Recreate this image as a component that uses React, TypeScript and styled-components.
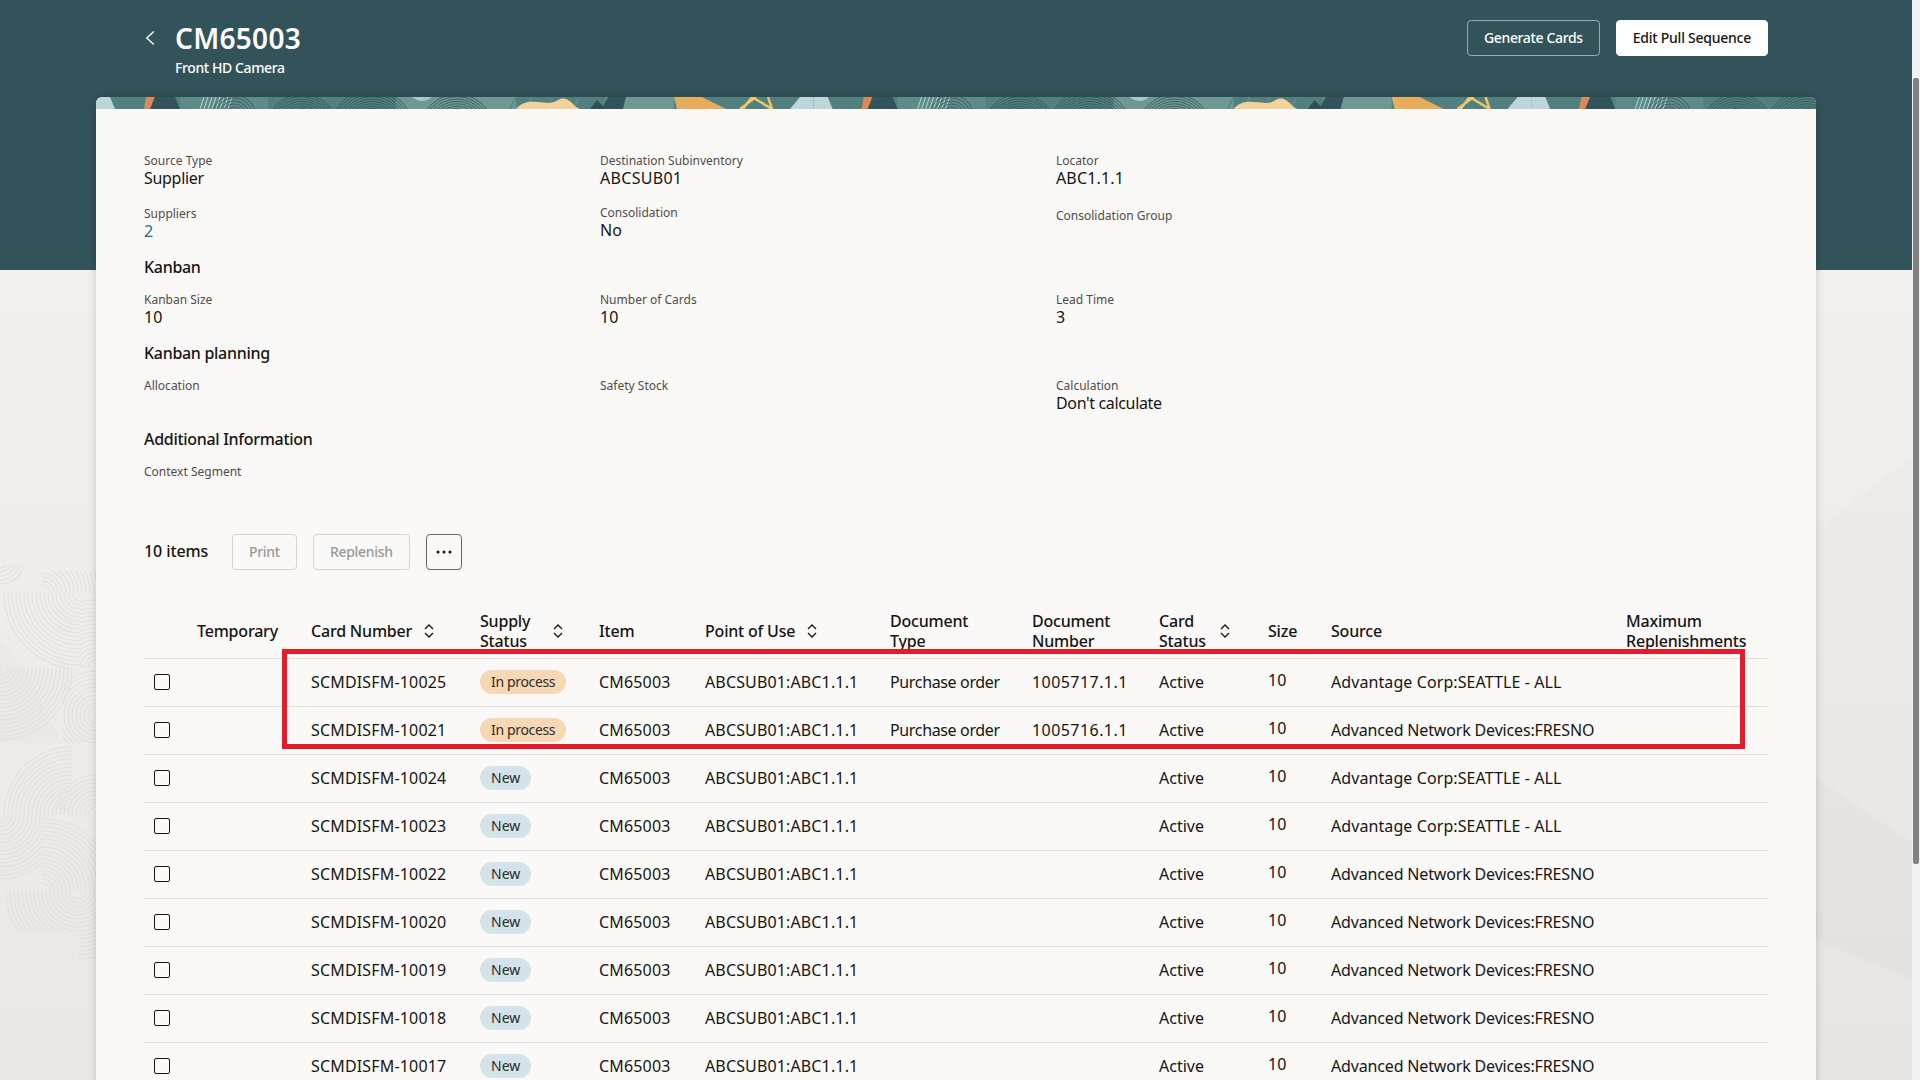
import React from 'react';
import styled, { createGlobalStyle } from 'styled-components';

const GlobalStyle = createGlobalStyle`
  html, body {
    margin: 0;
    height: 100%;
    overflow: hidden;
  }
  body {
    font-family: 'Noto Sans', 'Liberation Sans', sans-serif;
    color: #161513;
  }
  * {
    box-sizing: border-box;
  }
`;

const Page = styled.div`
  position: relative;
  height: 100vh;
  overflow: hidden;
  background: linear-gradient(#33535a 0 270px, #f1f0ee 270px, #e9e8e6 100%);
`;

const Backdrop = styled.svg`
  position: absolute;
  left: 0;
  top: 0;
  width: 1920px;
  height: 1080px;
`;

const Content = styled.div`
  position: relative;
  width: 1912px;
`;

const Header = styled.header`
  display: flex;
  justify-content: space-between;
  height: 97px;
  padding: 20px 144px 0 144px;
`;

const TitleArea = styled.div`
  display: flex;
`;

const BackButton = styled.svg`
  width: 10px;
  height: 14px;
  margin: 11px 20px 0 1px;
  fill: none;
  stroke: #fff;
  stroke-width: 1.4;
`;

const Title = styled.h1`
  margin: 0;
  font-size: 28px;
  line-height: 36px;
  font-weight: 600;
  letter-spacing: 0.3px;
  color: #fff;
`;

const Subtitle = styled.div`
  margin-top: 2px;
  font-size: 14px;
  line-height: 20px;
  font-weight: 500;
  letter-spacing: -0.4px;
  color: #fff;
`;

const HeaderActions = styled.div`
  display: flex;
  gap: 16px;
`;

const HeaderButton = styled.button<{ $solid?: boolean }>`
  height: 36px;
  border-radius: 4px;
  border: 1px solid ${(p) => (p.$solid ? '#fff' : 'rgba(255, 255, 255, 0.5)')};
  background: ${(p) => (p.$solid ? '#fff' : 'transparent')};
  color: ${(p) => (p.$solid ? '#161513' : '#fff')};
  font: 500 14px 'Noto Sans', sans-serif;
  letter-spacing: ${(p) => (p.$solid ? '-0.25px' : '-0.35px')};
  padding: 0 16px 2px;
`;

const Card = styled.main`
  margin-left: 96px;
  width: 1720px;
  border-radius: 6px 6px 0 0;
  background: #fbf9f8;
  box-shadow: 0 0 8px rgba(0, 0, 0, 0.18);
  overflow: hidden;
`;

const Band = styled.svg`
  display: block;
  width: 1720px;
  height: 12px;
`;

const CardBody = styled.div`
  padding: 44px 48px 0;
`;

const FieldGrid = styled.div`
  display: grid;
  grid-template-columns: 456px 456px 1fr;
  row-gap: 17px;
`;

const Field = styled.div``;

const LowerField = styled(Field)`
  margin-top: 2px;
`;

const HigherField = styled(Field)`
  margin-top: -1px;
`;

const Label = styled.div`
  font-size: 12px;
  line-height: 16px;
  color: #4f4c49;
`;

const Value = styled.div<{ $link?: boolean; $ls?: number }>`
  min-height: 20px;
  padding-bottom: 2px;
  font-size: 16px;
  line-height: 18px;
  letter-spacing: ${(p) => p.$ls ?? 0}px;
  color: ${(p) => (p.$link ? '#2b6c85' : '#161513')};
`;

const Heading = styled.h2`
  margin: 14px 0 12px;
  padding-bottom: 2px;
  font-size: 16px;
  line-height: 22px;
  font-weight: 500;
  letter-spacing: -0.3px;
`;

const Toolbar = styled.div`
  display: flex;
  align-items: center;
  margin-top: 34px;
  height: 36px;
`;

const ItemCount = styled.div`
  padding-bottom: 2px;
  font-size: 16px;
  font-weight: 500;
  width: 88px;
  letter-spacing: -0.1px;
`;

const ToolButton = styled.button`
  height: 36px;
  padding: 0 16px 2px;
  margin-right: 16px;
  border: 1px solid #d6d4d2;
  border-radius: 4px;
  background: transparent;
  color: #9a9895;
  font: 500 14px 'Noto Sans', sans-serif;
  letter-spacing: -0.3px;
`;

const MoreButton = styled.button`
  display: flex;
  align-items: center;
  justify-content: center;
  width: 36px;
  height: 36px;
  padding: 0;
  border: 1px solid #6b6966;
  border-radius: 4px;
  background: transparent;
`;

const TableWrap = styled.div`
  position: relative;
  margin-top: 41px;
`;

const columns = '53px 114px 169px 119px 106px 185px 142px 127px 109px 63px 295px 142px';

const HeadRow = styled.div`
  display: grid;
  grid-template-columns: ${columns};
  height: 48px;
  padding-bottom: 8px;
  border-bottom: 1px solid #dfdddb;
`;

const HeadCell = styled.div`
  display: flex;
  align-items: center;
  font-size: 16px;
  line-height: 20px;
  font-weight: 500;
  letter-spacing: -0.2px;
`;

const HeadText = styled.span<{ $width?: number }>`
  width: ${(p) => (p.$width ? `${p.$width}px` : 'auto')};
  white-space: pre-line;
`;

const SortIcon = styled.svg`
  flex: none;
  width: 10px;
  height: 14px;
  margin-left: 12px;
  fill: none;
  stroke: #161513;
  stroke-width: 1.3;
`;

const Row = styled.div`
  display: grid;
  grid-template-columns: ${columns};
  align-items: center;
  height: 48px;
  padding-bottom: 2px;
  border-bottom: 1px solid #dfdddb;
  font-size: 16px;
`;

const Cell = styled.div<{ $ls?: number }>`
  white-space: nowrap;
  letter-spacing: ${(p) => p.$ls ?? 0}px;
`;

const SizeCell = styled(Cell)`
  padding-bottom: 3px;
`;

const Checkbox = styled.span`
  display: block;
  width: 16px;
  height: 16px;
  margin-left: 10px;
  border: 1px solid #161513;
  border-radius: 2px;
`;

const Pill = styled.span<{ $tone: 'progress' | 'new' }>`
  display: inline-block;
  height: 24px;
  padding: 0 11px;
  border-radius: 12px;
  font-size: 14px;
  line-height: 24px;
  letter-spacing: ${(p) => (p.$tone === 'progress' ? '-0.35px' : '0')};
  color: #2e2c2a;
  background: ${(p) => (p.$tone === 'progress' ? '#f6d9b4' : '#d4e3e9')};
`;

const Highlight = styled.div`
  position: absolute;
  left: 138px;
  top: 38px;
  width: 1463px;
  height: 100px;
  border: 5px solid #e21c2b;
  pointer-events: none;
`;

const ScrollTrack = styled.div`
  position: absolute;
  top: 0;
  right: 0;
  width: 8px;
  height: 100%;
  background: #f1f1f1;
`;

const ScrollThumb = styled.div`
  position: absolute;
  top: 78px;
  left: 1px;
  width: 6px;
  height: 786px;
  border-radius: 2px;
  background: #828282;
`;

type Tile = { x: number; y: number; w: number; h: number; cx: number; cy: number; max: number };

// tiles of concentric arcs in the grey margin on the left
const tiles: Tile[] = [
  { x: 0, y: 565, w: 22, h: 28, cx: 0, cy: 560, max: 26 },
  { x: 42, y: 571, w: 54, h: 22, cx: 42, cy: 593, max: 60 },
  { x: 0, y: 593, w: 80, h: 75, cx: 80, cy: 593, max: 78 },
  { x: 80, y: 593, w: 16, h: 75, cx: 96, cy: 668, max: 70 },
  { x: 0, y: 668, w: 78, h: 75, cx: 0, cy: 668, max: 75 },
  { x: 62, y: 668, w: 34, h: 75, cx: 96, cy: 715, max: 46 },
  { x: 0, y: 743, w: 72, h: 72, cx: 72, cy: 815, max: 70 },
  { x: 55, y: 743, w: 41, h: 72, cx: 96, cy: 815, max: 40 },
  { x: 0, y: 815, w: 42, h: 76, cx: 0, cy: 815, max: 64 },
  { x: 42, y: 815, w: 54, h: 76, cx: 42, cy: 891, max: 72 },
  { x: 6, y: 891, w: 72, h: 40, cx: 78, cy: 891, max: 72 },
  { x: 78, y: 891, w: 18, h: 70, cx: 78, cy: 891, max: 72 },
];

const Arcs = ({ cx, cy, min, max, step, width, color }: { cx: number; cy: number; min: number; max: number; step: number; width: number; color: string }) => {
  const radii: number[] = [];
  for (let r = min; r <= max; r += step) radii.push(r);
  return (
    <g fill='none' stroke={color} strokeWidth={width}>
      {radii.map((r) => (
        <circle key={r} cx={cx} cy={cy} r={r} />
      ))}
    </g>
  );
};

const BandTile = ({ x }: { x: number }) => (
  <g transform={`translate(${x} 0)`}>
    <rect x='0' y='0' width='718' height='12' fill='#52807e' />
    <rect x='84' y='0' width='88' height='12' fill='#5d8b88' />
    <rect x='300' y='0' width='120' height='12' fill='#6e9893' />
    <rect x='510' y='0' width='68' height='12' fill='#6e9893' />
    <polygon points='0,0 14,0 19,12 0,12' fill='#bcd6d9' />
    <polygon points='50,0 59,0 54,12 48,12' fill='#db8a57' />
    <polygon points='59,0 79,0 84,12 54,12' fill='#33535a' />
    {[104, 108, 112, 116, 120, 124, 128, 132].map((v) => (
      <line key={v} x1={v} y1='12' x2={v + 4} y2='0' stroke='#bcd6d4' strokeWidth='1' />
    ))}
    <Arcs cx={138} cy={20} min={4} max={24} step={3} width={0.7} color='#2f5053' />
    <Arcs cx={206} cy={34} min={20} max={38} step={2.4} width={0.7} color='#2c4d50' />
    <Arcs cx={276} cy={34} min={20} max={42} step={2.4} width={0.7} color='#2c4d50' />
    <Arcs cx={361} cy={34} min={20} max={38} step={2.4} width={0.7} color='#2c4d50' />
    <path d='M316 0 Q326 8 336 0 Z' fill='#a5cac9' />
    <path d='M420 0 l-6 12 M436 0 l-6 12 M456 0 l-6 12 M482 2 l-5 10' stroke='#5d8b88' strokeWidth='2' />
    <path d='M420 12 C428 2 440 5 452 6 C462 6 462 0 470 2 C476 4 478 10 484 12 Z' fill='#f3d39a' />
    <polygon points='494,12 501,3 510,12' fill='#2f5053' />
    <polygon points='512,0 530,0 527,12 506,12' fill='#33535a' />
    <polygon points='578,0 606,0 630,12 581,12' fill='#e6ae5c' />
    <path d='M644 12 L660 0 M647 12 L656 0 L676 12 L672 0' fill='none' stroke='#eec66c' strokeWidth='2.4' />
    <polygon points='704,0 726,0 734,12 694,12' fill='#bcd6d9' />
  </g>
);

const Sort = () => (
  <SortIcon viewBox='0 0 10 14'>
    <path d='M1 5 L5 1 L9 5 M1 9 L5 13 L9 9' />
  </SortIcon>
);

const seattle = 'Advantage Corp:SEATTLE - ALL';
const fresno = 'Advanced Network Devices:FRESNO';

const rows = [
  { card: 'SCMDISFM-10025', status: 'In process', doc: 'Purchase order', num: '1005717.1.1', source: seattle },
  { card: 'SCMDISFM-10021', status: 'In process', doc: 'Purchase order', num: '1005716.1.1', source: fresno },
  { card: 'SCMDISFM-10024', status: 'New', doc: '', num: '', source: seattle },
  { card: 'SCMDISFM-10023', status: 'New', doc: '', num: '', source: seattle },
  { card: 'SCMDISFM-10022', status: 'New', doc: '', num: '', source: fresno },
  { card: 'SCMDISFM-10020', status: 'New', doc: '', num: '', source: fresno },
  { card: 'SCMDISFM-10019', status: 'New', doc: '', num: '', source: fresno },
  { card: 'SCMDISFM-10018', status: 'New', doc: '', num: '', source: fresno },
  { card: 'SCMDISFM-10017', status: 'New', doc: '', num: '', source: fresno },
];

const App = () => {
  return (
    <Page>
      <GlobalStyle />
      <Backdrop viewBox='0 0 1920 1080'>
        <polygon points='1816,529 1912,457 1912,1080 1816,1080' fill='rgba(0,0,0,0.01)' />
        <polygon points='1816,778 1912,842 1912,979 1816,941' fill='rgba(0,0,0,0.014)' />
        <polygon points='0,640 24,668 62,743 0,743' fill='rgba(0,0,0,0.012)' />
        <defs>
          {tiles.map((t, i) => (
            <clipPath id={`tile${i}`} key={i}>
              <rect x={t.x} y={t.y} width={t.w} height={t.h} />
            </clipPath>
          ))}
        </defs>
        {tiles.map((t, i) => (
          <g clipPath={`url(#tile${i})`} key={i}>
            <Arcs cx={t.cx} cy={t.cy} min={8} max={t.max} step={4} width={1.2} color='#e2e1df' />
          </g>
        ))}
      </Backdrop>
      <Content>
        <Header>
          <TitleArea>
            <BackButton viewBox='0 0 10 14'>
              <path d='M8.8 0.6 L1.8 7 L8.8 13.4' />
            </BackButton>
            <div>
              <Title>CM65003</Title>
              <Subtitle>Front HD Camera</Subtitle>
            </div>
          </TitleArea>
          <HeaderActions>
            <HeaderButton>Generate Cards</HeaderButton>
            <HeaderButton $solid>Edit Pull Sequence</HeaderButton>
          </HeaderActions>
        </Header>
        <Card>
          <Band viewBox='0 0 1720 12'>
            <BandTile x={0} />
            <BandTile x={717.6} />
            <BandTile x={1435.2} />
          </Band>
          <CardBody>
            <FieldGrid>
              <Field>
                <Label>Source Type</Label>
                <Value $ls={-0.3}>Supplier</Value>
              </Field>
              <Field>
                <Label>Destination Subinventory</Label>
                <Value $ls={0.3}>ABCSUB01</Value>
              </Field>
              <Field>
                <Label>Locator</Label>
                <Value $ls={0.15}>ABC1.1.1</Value>
              </Field>
              <Field>
                <Label>Suppliers</Label>
                <Value $link>2</Value>
              </Field>
              <HigherField>
                <Label>Consolidation</Label>
                <Value>No</Value>
              </HigherField>
              <LowerField>
                <Label>Consolidation Group</Label>
              </LowerField>
            </FieldGrid>
            <Heading>Kanban</Heading>
            <FieldGrid>
              <Field>
                <Label>Kanban Size</Label>
                <Value>10</Value>
              </Field>
              <Field>
                <Label>Number of Cards</Label>
                <Value>10</Value>
              </Field>
              <Field>
                <Label>Lead Time</Label>
                <Value>3</Value>
              </Field>
            </FieldGrid>
            <Heading>Kanban planning</Heading>
            <FieldGrid>
              <Field>
                <Label>Allocation</Label>
                <Value />
              </Field>
              <Field>
                <Label>Safety Stock</Label>
                <Value />
              </Field>
              <Field>
                <Label>Calculation</Label>
                <Value $ls={-0.35}>Don't calculate</Value>
              </Field>
            </FieldGrid>
            <Heading>Additional Information</Heading>
            <Field>
              <Label>Context Segment</Label>
              <Value />
            </Field>
            <Toolbar>
              <ItemCount>10 items</ItemCount>
              <ToolButton>Print</ToolButton>
              <ToolButton>Replenish</ToolButton>
              <MoreButton>
                <svg width='18' height='4' viewBox='0 0 18 4' fill='#161513'>
                  <circle cx='3' cy='2' r='1.5' />
                  <circle cx='9' cy='2' r='1.5' />
                  <circle cx='15' cy='2' r='1.5' />
                </svg>
              </MoreButton>
            </Toolbar>
            <TableWrap>
              <HeadRow>
                <HeadCell />
                <HeadCell>Temporary</HeadCell>
                <HeadCell>
                  <HeadText>Card Number</HeadText>
                  <Sort />
                </HeadCell>
                <HeadCell>
                  <HeadText $width={61}>{'Supply\nStatus'}</HeadText>
                  <Sort />
                </HeadCell>
                <HeadCell>Item</HeadCell>
                <HeadCell>
                  <HeadText>Point of Use</HeadText>
                  <Sort />
                </HeadCell>
                <HeadCell>
                  <HeadText>{'Document\nType'}</HeadText>
                </HeadCell>
                <HeadCell>
                  <HeadText>{'Document\nNumber'}</HeadText>
                </HeadCell>
                <HeadCell>
                  <HeadText $width={49}>{'Card\nStatus'}</HeadText>
                  <Sort />
                </HeadCell>
                <HeadCell>Size</HeadCell>
                <HeadCell>Source</HeadCell>
                <HeadCell>
                  <HeadText>{'Maximum\nReplenishments'}</HeadText>
                </HeadCell>
              </HeadRow>
              {rows.map((r) => (
                <Row key={r.card}>
                  <Cell>
                    <Checkbox />
                  </Cell>
                  <Cell />
                  <Cell $ls={0.17}>{r.card}</Cell>
                  <Cell>
                    <Pill $tone={r.status === 'New' ? 'new' : 'progress'}>{r.status}</Pill>
                  </Cell>
                  <Cell $ls={0.17}>CM65003</Cell>
                  <Cell $ls={0.14}>ABCSUB01:ABC1.1.1</Cell>
                  <Cell $ls={-0.35}>{r.doc}</Cell>
                  <Cell $ls={0.44}>{r.num}</Cell>
                  <Cell>Active</Cell>
                  <SizeCell>10</SizeCell>
                  <Cell $ls={r.source === fresno ? -0.16 : 0.09}>{r.source}</Cell>
                  <Cell />
                </Row>
              ))}
              <Highlight />
            </TableWrap>
          </CardBody>
        </Card>
      </Content>
      <ScrollTrack>
        <ScrollThumb />
      </ScrollTrack>
    </Page>
  );
};

export default App;
